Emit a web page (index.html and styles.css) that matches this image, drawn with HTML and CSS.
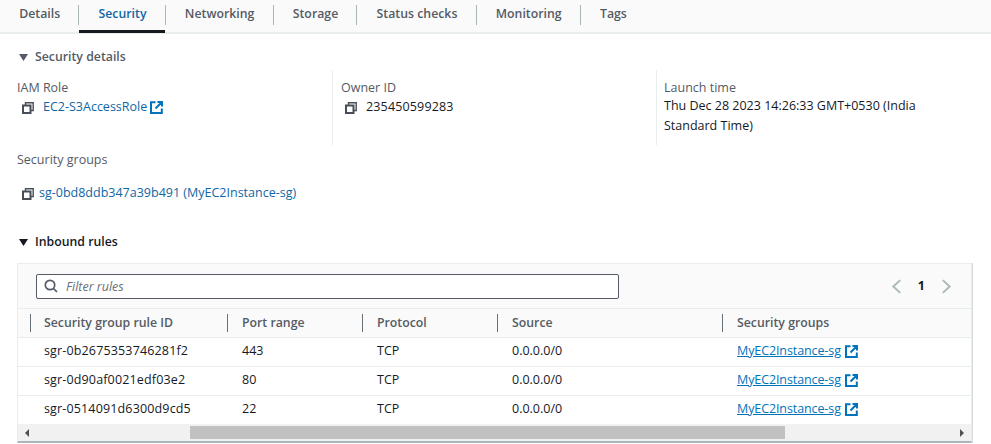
FILE: index.html
```html
<!DOCTYPE html>
<html lang="en">
<head>
<meta charset="utf-8">
<title>Security</title>
<link rel="stylesheet" href="styles.css">
</head>
<body>
<svg class="defs" width="0" height="0" aria-hidden="true">
  <symbol id="copy" viewBox="0 0 12 12"><path d="M3.500 3V.8h7.700v7.700H8.800" fill="none" stroke="currentColor" stroke-width="1.400"/><rect x="1" y="3.500" width="7.500" height="7.500" fill="none" stroke="currentColor" stroke-width="2"/></symbol>
  <symbol id="ext" viewBox="0 0 13 13"><path d="M5.500 1.200H1v10.800h10.800V7.500M7.500 1H12v4.500M12 1 5.500 7.500" fill="none" stroke="currentColor" stroke-width="2"/></symbol>
  <symbol id="caret" viewBox="0 0 9 7"><path d="M0 0h9L4.500 7z" fill="currentColor"/></symbol>
</svg>
<nav class="tabs">
  <a class="tab">Details</a>
  <a class="tab active">Security</a>
  <a class="tab">Networking</a>
  <a class="tab">Storage</a>
  <a class="tab">Status checks</a>
  <a class="tab">Monitoring</a>
  <a class="tab">Tags</a>
</nav>
<main class="content">
  <h2 class="section-head muted"><svg class="caret"><use href="#caret"/></svg>Security details</h2>
  <div class="details">
    <div class="col col-first">
      <div class="label">IAM Role</div>
      <div class="value"><svg class="copy"><use href="#copy"/></svg><a class="link gap-wide">EC2-S3AccessRole</a><svg class="ext"><use href="#ext"/></svg></div>
      <div class="label label-second">Security groups</div>
      <div class="value value-sg"><svg class="copy"><use href="#copy"/></svg><a class="link">sg-0bd8ddb347a39b491 (MyEC2Instance-sg)</a></div>
    </div>
    <div class="col col-mid">
      <div class="label">Owner ID</div>
      <div class="value"><svg class="copy"><use href="#copy"/></svg><span class="gap-wide digits">235450599283</span></div>
    </div>
    <div class="col col-last">
      <div class="label">Launch time</div>
      <div class="launch">Thu Dec 28 2023 14:26:33 GMT+0530 (India Standard Time)</div>
    </div>
  </div>
  <h2 class="section-head inbound"><svg class="caret"><use href="#caret"/></svg>Inbound rules</h2>
  <section class="panel">
    <div class="toolbar">
      <label class="filter">
        <svg class="search" viewBox="0 0 14 14"><circle cx="6" cy="6" r="4.700" fill="none" stroke="currentColor" stroke-width="1.700"/><path d="M9.500 9.500 13 13" stroke="currentColor" stroke-width="1.700"/></svg>
        <span class="filter-text">Filter rules</span>
      </label>
      <div class="pager">
        <svg class="chev" viewBox="0 0 10 14"><path d="M8.500 1 2 7l6.500 6" fill="none" stroke="currentColor" stroke-width="1.700"/></svg>
        <b>1</b>
        <svg class="chev" viewBox="0 0 10 14"><path d="M1.500 1 8 7l-6.500 6" fill="none" stroke="currentColor" stroke-width="1.700"/></svg>
      </div>
    </div>
    <table class="rules">
      <thead>
        <tr><th class="c1"><span>Security group rule ID</span></th><th class="c2"><span>Port range</span></th><th class="c3"><span>Protocol</span></th><th class="c4"><span>Source</span></th><th><span>Security groups</span></th></tr>
      </thead>
      <tbody>
        <tr><td class="digits first">sgr-0b2675353746281f2</td><td>443</td><td>TCP</td><td>0.0.0.0/0</td><td><a class="link under">MyEC2Instance-sg</a><svg class="ext"><use href="#ext"/></svg></td></tr>
        <tr><td class="digits first">sgr-0d90af0021edf03e2</td><td>80</td><td>TCP</td><td>0.0.0.0/0</td><td><a class="link under">MyEC2Instance-sg</a><svg class="ext"><use href="#ext"/></svg></td></tr>
        <tr><td class="digits first">sgr-0514091d6300d9cd5</td><td>22</td><td>TCP</td><td>0.0.0.0/0</td><td><a class="link under">MyEC2Instance-sg</a><svg class="ext"><use href="#ext"/></svg></td></tr>
      </tbody>
    </table>
    <div class="scrollbar">
      <i class="arrow arrow-left"></i>
      <div class="track"><div class="thumb"></div></div>
      <i class="arrow arrow-right"></i>
    </div>
  </section>
</main>
</body>
</html>
```
FILE: styles.css
```css
* { box-sizing: border-box; }
html, body { margin: 0; height: 444px; overflow: hidden; background: #fff; }
body { font: 12.5px/20px "Open Sans", "Noto Sans", sans-serif; color: #16191f; }
.defs { position: absolute; }
.tabs { display: flex; height: 34px; background: #fafafa; border-bottom: 2px solid #eaeded; }
.tab { position: relative; height: 32px; padding: 4px 19.2px 0; font-size: 12.3px; font-weight: 600; color: #545b64; line-height: 20px; white-space: nowrap; }
.tab + .tab::before { content: ""; position: absolute; left: -1px; top: 5px; height: 20px; width: 1px; background: #aab7b8; }
.tab.active { color: #0f67a5; }
.tab.active::after { content: ""; position: absolute; left: 0; right: 1px; top: 30px; height: 3px; background: #16191f; }
.content { padding: 13px 19px 0 17px; }
.section-head { margin: 0; display: flex; align-items: center; font-size: 12.3px; line-height: 20px; font-weight: 600; color: #16191f; }
.section-head.muted { color: #545b64; }
.caret { width: 9px; height: 7px; margin: 1px 7px 0 2px; color: #16191f; }
.section-head.muted .caret { color: #545b64; }
.details { display: grid; grid-template-columns: 315px 324px 1fr; margin-top: 3px; }
.col { padding-left: 8px; border-left: 1px solid #eaeded; }
.col-first { border-left: 0; padding-left: 0; height: 153px; }
.col-mid { height: 75px; }
.col-last { height: 75px; padding-left: 7px; }
.label { color: #545b64; line-height: 20px; margin-top: 8px; }
.label-second { margin-top: 33px; }
.value { display: flex; align-items: center; line-height: 20px; margin-top: -1px; padding-left: 5px; }
.col-mid .value { padding-left: 4px; }
.value-sg { margin-top: 13px; }
.copy { width: 12px; height: 12px; color: #474e57; flex: none; margin-top: 1px; }
.value-sg .link { margin-left: 5px; }
.gap-wide { margin-left: 9px; }
.digits { letter-spacing: .15px; }
.link { color: #0f67a5; }
.ext { width: 13px; height: 13px; color: #0073bb; margin-left: 3px; vertical-align: -3px; }
.launch { line-height: 20px; width: 270px; margin-top: -2px; }
.inbound { margin-top: 9px; }
.panel { margin-top: 11px; border: 1px solid #eaeded; border-bottom: 2px solid #aab7b8; background: #fff; box-shadow: 1px 0 0 #d5dbdb; }
.toolbar { display: flex; justify-content: space-between; align-items: center; height: 45px; background: #fafafa; border-bottom: 1px solid #eaeded; padding: 0 19px 0 18px; }
.filter { display: flex; align-items: center; gap: 8px; width: 583px; height: 25px; background: #fff; border: 1px solid #545b64; border-radius: 2px; padding-left: 7px; font-style: italic; color: #687078; }
.filter-text { padding-top: 1px; }
.search { width: 14px; height: 14px; color: #545b64; }
.pager { display: flex; align-items: center; gap: 16px; color: #aab7b8; }
.pager b { color: #16191f; font-weight: 700; }
.chev { width: 11px; height: 15px; }
.rules { width: 100%; border-collapse: collapse; table-layout: fixed; }
.rules th { height: 28px; padding: 0 0 0 12px; text-align: left; font-size: 12.3px; font-weight: 600; color: #545b64; background: #fafafa; }
.rules th span { display: block; padding-left: 14px; border-left: 1px solid #687078; line-height: 18px; }
.rules th.c1 span { padding-left: 13px; }
.rules .c1 { width: 197px; }
.rules .c2, .rules .c3 { width: 135px; }
.rules .c4 { width: 225px; }
.rules td { height: 29px; padding: 0 0 2px 27px; border-top: 1px solid #eaeded; white-space: nowrap; }
.rules td.first { padding-left: 26px; }
.under { color: #0073bb; text-decoration: underline; padding-right: 3px; letter-spacing: -.1px; }
.rules td .ext { margin-left: 1px; }
.scrollbar { display: flex; align-items: center; height: 17px; background: #f1f1f1; }
.arrow { width: 0; height: 0; border: 4px solid transparent; flex: none; }
.arrow-left { border-right-color: #505050; border-left: 0; margin-left: 7px; }
.arrow-right { border-left-color: #505050; border-right: 0; margin-right: 7px; }
.track { flex: 1; padding-left: 161px; padding-right: 175px; }
.thumb { height: 13px; background: #c1c1c1; }
```
